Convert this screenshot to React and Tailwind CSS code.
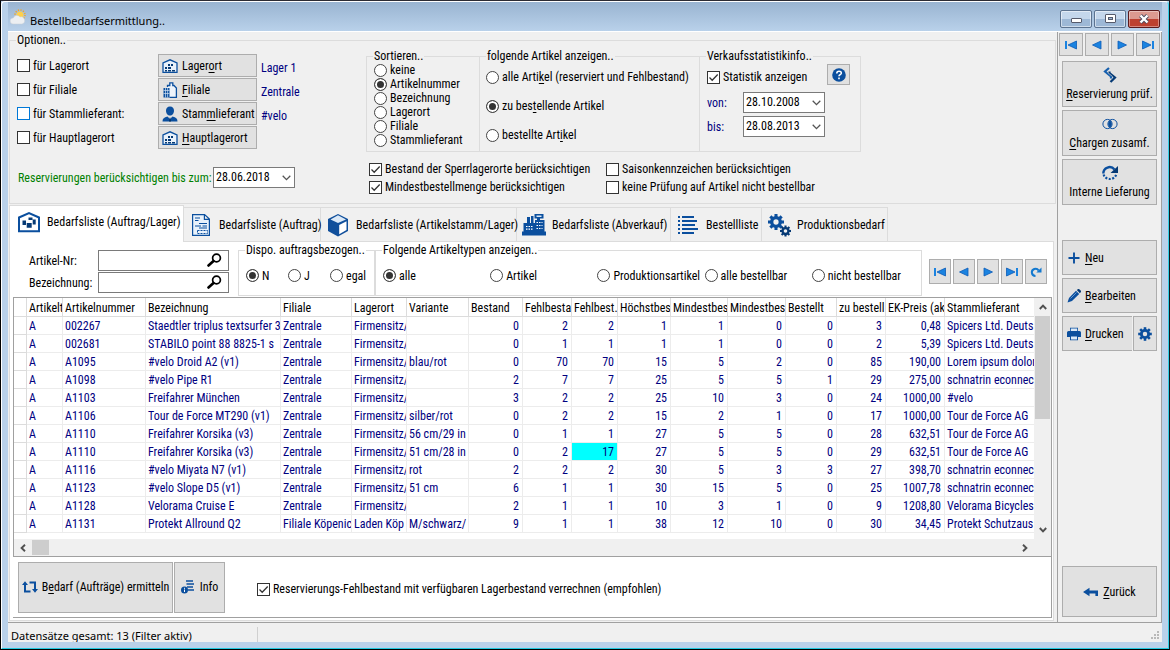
import React from 'react';
import clsx from 'clsx';

const BLUE = '#0b4f9e';
const DARK = '#063a75';

const articles = [
  ['A', '002267', 'Staedtler triplus textsurfer 36', 'Zentrale', 'Firmensitz/', '', '0', '2', '2', '1', '1', '0', '0', '3', '0,48', 'Spicers Ltd. Deuts'],
  ['A', '002681', 'STABILO point 88 8825-1 s', 'Zentrale', 'Firmensitz/', '', '0', '1', '1', '1', '1', '0', '0', '2', '5,39', 'Spicers Ltd. Deuts'],
  ['A', 'A1095', '#velo Droid A2 (v1)', 'Zentrale', 'Firmensitz/', 'blau/rot', '0', '70', '70', '15', '5', '2', '0', '85', '190,00', 'Lorem ipsum dolor'],
  ['A', 'A1098', '#velo Pipe R1', 'Zentrale', 'Firmensitz/', '', '2', '7', '7', '25', '5', '5', '1', '29', '275,00', 'schnatrin econnec'],
  ['A', 'A1103', 'Freifahrer München', 'Zentrale', 'Firmensitz/', '', '3', '2', '2', '25', '10', '3', '0', '24', '1000,00', '#velo'],
  ['A', 'A1106', 'Tour de Force MT290 (v1)', 'Zentrale', 'Firmensitz/', 'silber/rot', '0', '2', '2', '15', '2', '1', '0', '17', '1000,00', 'Tour de Force AG'],
  ['A', 'A1110', 'Freifahrer Korsika (v3)', 'Zentrale', 'Firmensitz/', '56 cm/29 in', '0', '1', '1', '27', '5', '5', '0', '28', '632,51', 'Tour de Force AG'],
  ['A', 'A1110', 'Freifahrer Korsika (v3)', 'Zentrale', 'Firmensitz/', '51 cm/28 in', '0', '2', '17', '27', '5', '5', '0', '29', '632,51', 'Tour de Force AG'],
  ['A', 'A1116', '#velo Miyata N7 (v1)', 'Zentrale', 'Firmensitz/', 'rot', '2', '2', '2', '30', '5', '3', '3', '27', '398,70', 'schnatrin econnec'],
  ['A', 'A1123', '#velo Slope D5 (v1)', 'Zentrale', 'Firmensitz/', '51 cm', '6', '1', '1', '30', '15', '5', '0', '25', '1007,78', 'schnatrin econnec'],
  ['A', 'A1128', 'Velorama Cruise E', 'Zentrale', 'Firmensitz/', '', '2', '1', '1', '10', '3', '1', '0', '9', '1208,80', 'Velorama Bicycles'],
  ['A', 'A1131', 'Protekt Allround Q2', 'Filiale Köpenic', 'Laden Köp', 'M/schwarz/', '9', '1', '1', '38', '12', '10', '0', '30', '34,45', 'Protekt Schutzaus'],
];

const columns = [
  { title: 'Artikelt', width: 'w-[36px]' },
  { title: 'Artikelnummer', width: 'w-[83px]' },
  { title: 'Bezeichnung', width: 'w-[135px]' },
  { title: 'Filiale', width: 'w-[71px]' },
  { title: 'Lagerort', width: 'w-[55px]' },
  { title: 'Variante', width: 'w-[62px]' },
  { title: 'Bestand', width: 'w-[54px]', num: true },
  { title: 'Fehlbesta', width: 'w-[49px]', num: true },
  { title: 'Fehlbest.', width: 'w-[46px]', num: true },
  { title: 'Höchstbes', width: 'w-[53px]', num: true },
  { title: 'Mindestbes', width: 'w-[57px]', num: true },
  { title: 'Mindestbes', width: 'w-[58px]', num: true },
  { title: 'Bestellt', width: 'w-[51px]', num: true },
  { title: 'zu bestell', width: 'w-[49px]', num: true },
  { title: 'EK-Preis (ak', width: 'w-[59px]', num: true },
  { title: 'Stammlieferant', width: '' },
];

// "&" marks the access key, as in the menu captions
const Caption = ({ text }) => {
  const at = text.indexOf('&');
  if (at < 0) return <span>{text}</span>;
  return (
    <span>
      {text.slice(0, at)}
      <u className="underline-offset-2">{text[at + 1]}</u>
      {text.slice(at + 2)}
    </span>
  );
};

const Check = ({ label, checked, focus, className }) => (
  <label className={clsx('flex items-center gap-[3px] whitespace-nowrap', className)}>
    <span className="relative flex shrink-0">
      <input
        type="checkbox"
        defaultChecked={checked}
        className={clsx('peer size-[13px] appearance-none border bg-white', focus ? 'border-[#0078d7]' : 'border-[#333]')}
      />
      <svg viewBox="0 0 13 13" className="pointer-events-none absolute inset-0 hidden size-[13px] peer-checked:block">
        <path d="M2.5 6.5 5.2 9.2 10.7 3.5" fill="none" stroke="#333" strokeWidth="1.3" />
      </svg>
    </span>
    {label}
  </label>
);

const Radio = ({ name, label, checked }) => (
  <label className="flex items-center gap-[3px] whitespace-nowrap">
    <input
      type="radio"
      name={name}
      defaultChecked={checked}
      className="size-[13px] shrink-0 appearance-none rounded-full border border-[#444] bg-white checked:bg-[#333] checked:shadow-[inset_0_0_0_2px_white]"
    />
    <Caption text={label} />
  </label>
);

const GroupBox = ({ title, className, children }) => (
  <fieldset className={clsx('min-w-0 border border-[#dcdcdc]', className)}>
    <legend className="ml-[6px] px-px leading-[14px]">{title}</legend>
    {children}
  </fieldset>
);

const DateSelect = ({ id, value, label }) => (
  <span className="relative flex w-[82px]">
    <select id={id} aria-label={label} className="h-[21px] w-full appearance-none border border-[#7a7a7a] bg-white px-[2px] leading-[17px] text-black">
      <option>{value}</option>
    </select>
    <svg viewBox="0 0 9 6" className="pointer-events-none absolute top-2 right-1 h-[6px] w-[9px]">
      <path d="M.7 .8 4.5 4.6 8.3 .8" fill="none" stroke="#555" strokeWidth="1.3" />
    </svg>
  </span>
);

const Button = ({ className, children, ...props }) => (
  <button type="button" className={clsx('flex items-center border border-[#adadad] bg-[#e1e1e1] whitespace-nowrap', className)} {...props}>
    {children}
  </button>
);

const NavIcon = ({ kind }) => (
  <svg viewBox="0 0 12 10" className="h-[10px] w-[12px]">
    {kind === 'first' && <path d="M0 1h2v8H0z" fill="#1b83e0" />}
    {kind === 'last' && <path d="M10 1h2v8h-2z" fill="#1b83e0" />}
    {kind === 'first' && <path d="M11.5 1v8L3 5z" fill="#1b83e0" stroke="#0b5cb8" strokeWidth=".8" />}
    {kind === 'prev' && <path d="M10 1v8L1.5 5z" fill="#1b83e0" stroke="#0b5cb8" strokeWidth=".8" />}
    {kind === 'next' && <path d="M2 1v8L10.5 5z" fill="#1b83e0" stroke="#0b5cb8" strokeWidth=".8" />}
    {kind === 'last' && <path d="M.5 1v8L9 5z" fill="#1b83e0" stroke="#0b5cb8" strokeWidth=".8" />}
    {kind === 'reload' && (
      <>
        <path d="M5.5 9A3.6 3.6 0 1 1 8.6 3.6" fill="none" stroke="#1379cf" strokeWidth="2" />
        <path d="M11.5 .5v5H6.300z" fill="#1379cf" />
      </>
    )}
  </svg>
);

const navLabels = { first: 'Erster', prev: 'Vorheriger', next: 'Nächster', last: 'Letzter', reload: 'Aktualisieren' };

const WarehouseIcon = () => (
  <svg viewBox="0 0 16 14" className="h-[14px] w-[16px]">
    <path d="M1 13.3V4L8 .8 15 4v9.3z" fill="#e9f1fa" stroke={BLUE} strokeWidth="1.3" />
    <path d="M6 5h2v2H6zM9 5h2v2H9zM3 8h2v2H3zM6 8h3v2H6zM3 11h2v1.4H3zM6 11h3v1.4H6zM10 11h3v1.4h-3z" fill={DARK} />
  </svg>
);

const BranchIcon = () => (
  <svg viewBox="0 0 16 16" className="size-[16px]">
    <path d="M5.500 5V3.500h2.300V.8h3v2.700h1.200L14.400 6v9.300H7.500" fill="#eef4fb" stroke={BLUE} strokeWidth="1.300" />
    <path d="M1.500 6h6v9.500h-6z" fill={BLUE} />
    <path d="M1.500 8.500h6M1.500 11.500h6M3.500 6v9.500M5.600 6v9.500" stroke="#cfe0f2" strokeWidth=".7" />
  </svg>
);

const PersonIcon = () => (
  <svg viewBox="0 0 16 16" className="size-[16px]">
    <path d="M8 .5c2.600 0 4 1.700 4 4.200S10.200 9.600 8 9.600 4 7.200 4 4.700 5.400.5 8 .5zM.5 15.500c0-3 1.500-4.300 5-5L8 13l2.500-2.500c3.500.7 5 2 5 5z" fill={BLUE} />
    <path d="m8 11 1 4.500H7z" fill="#06305f" />
  </svg>
);

const GearPath = ({ cx, cy, r, fill }) => (
  <g transform={`translate(${cx} ${cy})`} fill={fill}>
    {[0, 45, 90, 135, 180, 225, 270, 315].map((a) => (
      <rect key={a} x={-r * 0.19} y={-r} width={r * 0.38} height={r * 0.5} transform={`rotate(${a})`} />
    ))}
    <circle r={r * 0.54} fill="none" stroke={fill} strokeWidth={r * 0.42} />
  </g>
);

const TabIcon = ({ kind }) => (
  <svg viewBox="0 0 24 24" className="size-[24px] shrink-0">
    {kind === 'house' && (
      <>
        <path d="M2 21.200V7.500L12 3l10 4.500v13.700z" fill="none" stroke={BLUE} strokeWidth="2" />
        <path d="M11.500 7.500h4V10h-4zM5.500 10.500h3.500V15H5.500zM9.700 13h5v4.800h-5zM15.700 9.500h3v5h-3z" fill={DARK} />
      </>
    )}
    {kind === 'doc' && (
      <>
        <path d="M3.600 1.600h12L20.400 6v16.400H3.600zM15.400 1.600V6.300h5" fill="#e9f2fb" stroke={BLUE} strokeWidth="1.200" />
        <path d="M6 5h5M6 7.500h3.500M10 10.500h8M6 13h6M13.500 13H18M10 15h8" stroke={BLUE} strokeWidth="1.200" />
        <path d="M8.500 17.500h10v3h-10z" fill="none" stroke={BLUE} strokeDasharray="2 1" />
      </>
    )}
    {kind === 'cube' && (
      <>
        <path d="M12 1 22 6v12l-10 5.500L2 18V6z" fill="#104f9b" />
        <path d="M12 2.300 20 6.400 12 10 4.500 6.400z" fill="#dbe9f7" />
        <path d="M13.200 12 20.500 8.300V17l-7.300 4.200z" fill="#fff" />
      </>
    )}
    {kind === 'register' && (
      <>
        <path d="M0 18.500h24v4H0zM1.500 10H5V4h3v6h1V3h2.500v7H13V7h2V5.500h-2.500V1h9v4.500H18V7h4.500v11.500H1.500z" fill={BLUE} />
        <path d="M14.500 2.500h5V4h-5z" fill="#dbe9f7" />
        <path d="M4 13.500h7M4 16.200h7M14.500 9.500h6M14.500 12.500h6M14.500 15.500h6" stroke="#fff" strokeWidth="1.200" strokeDasharray="1.500 1" />
      </>
    )}
    {kind === 'list' && (
      <>
        <path d="M2 4h2M2 8h2M2 12h2M2 16h2M2 20h2" stroke={BLUE} strokeWidth="1.800" />
        <path d="M6 4h12M6 8h15M6 12h13M6 16h16M6 20h12" stroke={BLUE} strokeWidth="1.800" />
      </>
    )}
    {kind === 'gears' && (
      <>
        <GearPath cx={9} cy={9} r={8} fill={BLUE} />
        <GearPath cx={18.500} cy={18} r={5.500} fill={DARK} />
      </>
    )}
  </svg>
);

const tabs = [
  { label: 'Bedarfsliste (Auftrag/Lager)', icon: 'house', width: 'w-[175px]', active: true },
  { label: 'Bedarfsliste (Auftrag)', icon: 'doc', width: 'w-[137px]' },
  { label: 'Bedarfsliste (Artikelstamm/Lager)', icon: 'cube', width: 'w-[196px]' },
  { label: 'Bedarfsliste (Abverkauf)', icon: 'register', width: 'w-[154px]' },
  { label: 'Bestellliste', icon: 'list', width: 'w-[91px]' },
  { label: 'Produktionsbedarf', icon: 'gears', width: 'w-[126px]' },
];

const TitleBar = () => (
  <header className="flex h-[29px] shrink-0 items-center bg-linear-to-b from-[#99b4d1] to-[#b9d1ea] pr-[2px] pl-[2px]">
    <svg viewBox="0 0 16 16" className="size-[16px]">
      <circle cx="10" cy="6" r="3.500" fill="#ffd04a" />
      <circle cx="10" cy="6" r="5" fill="none" stroke="#f5a623" strokeWidth="1.500" strokeDasharray="1.200 1.400" />
      <path d="M3 15a3 3 0 0 1 .3-6A3.800 3.800 0 0 1 10 8a3.500 3.500 0 0 1 2 7z" fill="#eceff2" stroke="#c9ced4" strokeWidth=".5" />
    </svg>
    <h1 className="ml-1 flex-1 pt-2 font-['Noto_Sans',sans-serif] text-[11px] leading-4">Bestellbedarfsermittlung..</h1>
    <div className="flex gap-[2px] pt-1">
      <button type="button" aria-label="Minimieren" className="flex h-[18px] w-[32px] items-center justify-center rounded-[2px] border border-[#5c7390] bg-linear-to-b from-[#c4d7ec] from-50% to-[#9db8d6] to-50% shadow-[inset_0_0_0_1px_#ffffff80]">
        <span className="mt-1 h-[5px] w-[11px] rounded-[1px] border border-[#555a6b] bg-white" />
      </button>
      <button type="button" aria-label="Maximieren" className="flex h-[18px] w-[32px] items-center justify-center rounded-[2px] border border-[#5c7390] bg-linear-to-b from-[#c4d7ec] from-50% to-[#9db8d6] to-50% shadow-[inset_0_0_0_1px_#ffffff80]">
        <span className="flex h-[9px] w-[11px] items-center justify-center rounded-[1px] border border-[#555a6b] bg-white">
          <span className="h-[3px] w-[5px] border border-[#555a6b] bg-[#9db8d6]" />
        </span>
      </button>
      <button type="button" aria-label="Schließen" className="flex h-[18px] w-[32px] items-center justify-center rounded-[2px] border border-[#5b1a1c] bg-linear-to-b from-[#dc9a90] from-50% to-[#bd4130] to-50% shadow-[inset_0_0_0_1px_#ffffff60]">
        <svg viewBox="0 0 12 10" className="h-[10px] w-[12px]">
          <path d="m2.500 1.500 7 7m0-7-7 7" stroke="#4a4d60" strokeWidth="4" />
          <path d="m2.500 1.500 7 7m0-7-7 7" stroke="#fff" strokeWidth="2.400" />
        </svg>
      </button>
    </div>
  </header>
);

const optionRows = [
  { label: 'für Lagerort', button: 'Lager&ort', icon: <WarehouseIcon />, value: 'Lager 1' },
  { label: 'für Filiale', button: '&Filiale', icon: <BranchIcon />, value: 'Zentrale' },
  { label: 'für Stammlieferant:', button: 'Stam&mlieferant', icon: <PersonIcon />, value: '#velo', focus: true },
  { label: 'für Hauptlagerort', button: '&Hauptlagerort', icon: <WarehouseIcon />, value: '' },
];

const Options = () => (
  <GroupBox title="Optionen.." className="mx-px mt-px">
    <div className="flex pb-[7px] pl-[7px]">
      <div className="w-[349px] shrink-0 pt-[7px]">
        <div className="flex flex-col gap-px">
          {optionRows.map((row) => (
            <div key={row.label} className="flex h-[23px] items-center">
              <Check label={row.label} focus={row.focus} className="w-[141px]" />
              <Button className="h-[23px] w-[99px] gap-1 pl-[3px]">
                <span className="flex w-[16px] justify-center">{row.icon}</span>
                <Caption text={row.button} />
              </Button>
              <span className="pt-1 pl-1 text-[#000080]">{row.value}</span>
            </div>
          ))}
        </div>
        <div className="mt-[18px] flex items-center pl-px text-[#008000]">
          <label htmlFor="reserved-until" className="w-[195px] whitespace-nowrap">Reservierungen berücksichtigen bis zum:</label>
          <DateSelect id="reserved-until" value="28.06.2018" />
        </div>
      </div>
      <div className="pt-[2px]">
        <div className="flex">
          <GroupBox title="Sortieren.." className="w-[114px]">
            <div className="pb-1 pl-[7px] leading-[14px]">
              <Radio name="sort" label="keine" />
              <Radio name="sort" label="Artikelnummer" checked />
              <Radio name="sort" label="Bezeichnung" />
              <Radio name="sort" label="Lagerort" />
              <Radio name="sort" label="Filiale" />
              <Radio name="sort" label="Stammlieferant" />
            </div>
          </GroupBox>
          <GroupBox title="folgende Artikel anzeigen.." className="w-[220px] border-l-0">
            <div className="flex flex-col gap-[13px] pt-[6px] pl-[6px] leading-4">
              <Radio name="show" label="alle Arti&kel (reserviert und Fehlbestand)" />
              <Radio name="show" label="zu bes&tellende Artikel" checked />
              <Radio name="show" label="bestellte Art&ikel" />
            </div>
          </GroupBox>
          <GroupBox title="Verkaufsstatistikinfo.." className="w-[161px] border-l-0">
            <div className="flex flex-col gap-[3px] pt-px pl-[7px]">
              <div className="flex h-[25px] items-start">
                <Check label="Statistik anzeigen" checked className="w-[120px] pt-[6px]" />
                <Button className="h-[21px] w-[23px] justify-center" aria-label="Hilfe">
                  <svg viewBox="0 0 14 14" className="size-[14px]">
                    <circle cx="7" cy="7" r="6.800" fill={BLUE} />
                    <path d="M4.800 5.400c0-3 4.600-2.800 4.500-.2C9.200 6.700 7 6.700 7 8.300M7 9.600v1.600" fill="none" stroke="#fff" strokeWidth="1.600" />
                  </svg>
                </Button>
              </div>
              <div className="flex items-center text-[#000080]">
                <label htmlFor="from" className="w-[36px]">von:</label>
                <DateSelect id="from" value="28.10.2008" />
              </div>
              <div className="flex items-center text-[#000080]">
                <label htmlFor="to" className="w-[36px]">bis:</label>
                <DateSelect id="to" value="28.08.2013" />
              </div>
            </div>
          </GroupBox>
        </div>
        <div className="mt-2 grid grid-cols-[237px_auto] pl-[3px] leading-[18px]">
          <Check label="Bestand der Sperrlagerorte berücksichtigen" checked />
          <Check label="Saisonkennzeichen berücksichtigen" />
          <Check label="Mindestbestellmenge berücksichtigen" checked />
          <Check label="keine Prüfung auf Artikel nicht bestellbar" />
        </div>
      </div>
    </div>
  </GroupBox>
);

const SearchField = ({ id, label }) => (
  <div className="flex items-center">
    <label htmlFor={id} className="w-[69px] whitespace-nowrap">{label}</label>
    <span className="relative flex">
      <input id={id} type="text" className="h-[21px] w-[131px] border border-[#7a7a7a] bg-white pr-6 pl-1" />
      <svg viewBox="0 0 15 14" className="pointer-events-none absolute top-[3px] right-[7px] h-[14px] w-[15px]">
        <circle cx="9.500" cy="5" r="3.900" fill="none" stroke="#000" strokeWidth="1.700" />
        <path d="M6.500 8 1.500 12.500" stroke="#000" strokeWidth="2.600" strokeLinecap="round" />
      </svg>
    </span>
  </div>
);

const Filters = () => (
  <div className="flex items-start pt-px pr-[6px] pl-[19px]">
    <div className="flex flex-col gap-px pt-[7px]">
      <SearchField id="article-no" label="Artikel-Nr:" />
      <SearchField id="description" label="Bezeichnung:" />
    </div>
    <GroupBox title="Dispo. auftragsbezogen.." className="ml-[9px] h-[53px] w-[137px]">
      <div className="flex h-[37px] items-center pl-[7px]">
        <span className="w-[42px]"><Radio name="dispo" label="N" checked /></span>
        <span className="w-[42px]"><Radio name="dispo" label="J" /></span>
        <Radio name="dispo" label="egal" />
      </div>
    </GroupBox>
    <GroupBox title="Folgende Artikeltypen anzeigen.." className="h-[53px] flex-1">
      <div className="grid h-[37px] grid-cols-5 items-center pr-[2px] pl-[7px]">
        <Radio name="type" label="alle" checked />
        <Radio name="type" label="Artikel" />
        <Radio name="type" label="Produktionsartikel" />
        <Radio name="type" label="alle bestellbar" />
        <Radio name="type" label="nicht bestellbar" />
      </div>
    </GroupBox>
    <div className="ml-[7px] flex gap-[2px] pt-4">
      {['first', 'prev', 'next', 'last', 'reload'].map((kind) => (
        <Button key={kind} className="h-[25px] w-[22px] justify-center" aria-label={navLabels[kind]}>
          <NavIcon kind={kind} />
        </Button>
      ))}
    </div>
  </div>
);

const Arrow = ({ d }) => (
  <svg viewBox="0 0 8 8" className="size-2">
    <path d={d} fill="none" stroke="#505050" strokeWidth="1.900" />
  </svg>
);

const Grid = () => (
  <div className="mt-px mr-px ml-[3px] flex min-h-0 flex-1 flex-col border border-[#a0a0a0] bg-white">
    <div className="flex min-h-0 flex-1">
      <div className="min-w-0 flex-1 overflow-hidden">
        <table className="w-full table-fixed border-separate border-spacing-0 text-left">
          <colgroup>
            <col className="w-[13px]" />
            {columns.map((col, i) => (
              <col key={i} className={col.width} />
            ))}
          </colgroup>
          <thead>
            <tr className="h-[19px]">
              <th className="border-r border-b border-[#dcdcdc] p-0" />
              {columns.map((col, i) => (
                <th key={i} className="overflow-hidden border-r border-b border-[#dcdcdc] p-0 pt-px pl-[2px] leading-4 font-normal whitespace-nowrap last:border-r-0">
                  {col.title}
                </th>
              ))}
            </tr>
          </thead>
          <tbody className="text-[#000080]">
            {articles.map((row, r) => (
              <tr key={r} className="h-[18px]">
                <td className="border-r border-b border-[#dcdcdc] p-0" />
                {row.map((cell, c) => (
                  <td
                    key={c}
                    className={clsx(
                      'overflow-hidden border-r border-b border-[#ececec] p-0 pt-px leading-4 whitespace-nowrap last:border-r-0',
                      columns[c].num ? 'pr-[3px] text-right' : 'pl-[2px]',
                      cell === '17' && c === 8 && 'bg-[#00ffff]'
                    )}
                  >
                    {cell}
                  </td>
                ))}
              </tr>
            ))}
          </tbody>
        </table>
      </div>
      <div className="flex w-[17px] flex-col items-center bg-[#f0f0f0]">
        <div className="flex h-[18px] items-center"><Arrow d="M.8 6 4 2.600 7.200 6" /></div>
        <div className="h-[103px] w-[15px] bg-[#cdcdcd]" />
        <div className="mt-auto flex h-[18px] items-center"><Arrow d="M.8 2 4 5.400 7.200 2" /></div>
      </div>
    </div>
    <div className="flex h-[17px] shrink-0 items-center bg-[#f0f0f0] pr-[22px] pl-[5px]">
      <Arrow d="M6 .8 2.600 4 6 7.200" />
      <div className="ml-[5px] h-[15px] w-[17px] bg-[#cdcdcd]" />
      <span className="ml-auto flex"><Arrow d="M2 .8 5.400 4 2 7.200" /></span>
    </div>
  </div>
);

const Footer = () => (
  <div className="mr-px ml-[3px] flex h-[61px] shrink-0 items-center gap-px border-r border-b border-[#a0a0a0] bg-white pl-[5px]">
    <Button className="h-[51px] w-[155px] justify-center gap-1">
      <svg viewBox="0 0 16 12" className="h-[12px] w-[16px]">
        <path d="M3 3v7.500h5.500M13 9V1.500H7.500" fill="none" stroke={BLUE} strokeWidth="2" />
        <path d="M3 .3 6 4H0zM13 11.700 10 8h6z" fill={BLUE} />
      </svg>
      <Caption text="B&edarf (Aufträge) ermitteln" />
    </Button>
    <Button className="h-[51px] w-[51px] justify-center gap-[6px]">
      <svg viewBox="0 0 13 14" className="h-[14px] w-[13px]">
        <path d="M5 1h7M5.500 4H13M6 7h6M7 10h6" stroke={BLUE} strokeWidth="1.500" />
        <circle cx="3.500" cy="10" r="3.500" fill={BLUE} />
        <path d="M3.500 7.800v1M3.500 9.500v2.500" stroke="#fff" />
      </svg>
      Info
    </Button>
    <Check label="Reservierungs-Fehlbestand mit verfügbaren Lagerbestand verrechnen (empfohlen)" checked className="pt-1 pl-[31px]" />
  </div>
);

const Sidebar = () => (
  <aside className="flex w-[105px] shrink-0 flex-col border-x border-[#a0a0a0] pt-px">
    <div className="grid grid-cols-4 gap-[2px] px-px">
      {['first', 'prev', 'next', 'last'].map((kind) => (
        <Button key={kind} className="h-[23px] justify-center" aria-label={navLabels[kind]}>
          <NavIcon kind={kind} />
        </Button>
      ))}
    </div>
    <div className="flex flex-1 flex-col gap-[3px] px-1 pt-[5px] pb-[5px]">
      <Button className="h-[46px] flex-col justify-center gap-1">
        <svg viewBox="0 0 14 16" className="h-[16px] w-[14px]">
          <path d="M6 1 2 4.500 8 9.500v2" fill="none" stroke="#1760ae" strokeWidth="2.200" />
          <path d="M7.500 15l4.500-4.500L6.500 6V4.500" fill="none" stroke={DARK} strokeWidth="2.200" />
          <path d="M4.800 5.600 9.600 9.600" stroke="#e1e1e1" strokeWidth=".7" />
        </svg>
        <Caption text="&Reservierung prüf." />
      </Button>
      <Button className="h-[46px] flex-col justify-center gap-1">
        <svg viewBox="0 0 16 16" className="size-[16px]">
          <path d="M8 4.200a4.800 4.800 0 0 1 0 7.600 4.800 4.800 0 0 1 0-7.600z" fill={BLUE} />
          <circle cx="5.500" cy="8" r="4.600" fill="none" stroke={BLUE} />
          <circle cx="10.500" cy="8" r="4.600" fill="none" stroke={BLUE} />
        </svg>
        <Caption text="&Chargen zusamf." />
      </Button>
      <Button className="h-[46px] flex-col justify-center gap-1">
        <svg viewBox="0 0 16 16" className="size-[16px]">
          <path d="M1.300 8.500A6.300 6.300 0 0 1 12.500 4.500" fill="none" stroke={BLUE} strokeWidth="2.400" />
          <path d="M16 1v7H8.500z" fill={DARK} />
          <path d="M1.600 9.500A6.500 6 0 0 0 14.200 9.500" fill="none" stroke={BLUE} strokeWidth="2.200" strokeDasharray="2 1.500" />
        </svg>
        <span>Interne Lieferung</span>
      </Button>
      <Button className="mt-8 h-[35px] gap-1 pl-1">
        <svg viewBox="0 0 14 14" className="size-[14px]">
          <path d="M7 1.500v11M1.500 7h11" stroke={BLUE} strokeWidth="1.900" />
        </svg>
        <Caption text="&Neu" />
      </Button>
      <Button className="h-[35px] gap-1 pl-1">
        <svg viewBox="0 0 14 14" className="size-[14px]">
          <path d="M.5 13.500 2 9l7-7.200L12.200 5 5 12z" fill={BLUE} />
          <path d="m9.800 1 1-.8a1.500 1.500 0 0 1 1.800.2l1 1a1.500 1.500 0 0 1 .1 1.900l-.8.900z" fill={DARK} />
          <path d="m3.500 9.500 6-6" stroke="#7fa9d8" strokeWidth=".8" />
        </svg>
        <Caption text="&Bearbeiten" />
      </Button>
      <div className="flex h-[35px]">
        <Button className="flex-1 gap-1 border-r-0 pl-1">
          <svg viewBox="0 0 14 14" className="size-[14px]">
            <path d="M3 4V.8h8V4h1.500A1.500 1.500 0 0 1 14 5.500V10h-3v3.300H3V10H0V5.500A1.500 1.500 0 0 1 1.500 4z" fill={BLUE} />
            <path d="M3.800 1.500h6.400V4H3.800zM4 9.500h6v3H4z" fill="#dbe9f7" />
          </svg>
          <Caption text="&Drucken" />
        </Button>
        <Button className="ml-px w-[24px] justify-center" aria-label="Druckeinstellungen">
          <svg viewBox="0 0 14 14" className="size-[14px]">
            <GearPath cx={7} cy={7} r={6.800} fill={BLUE} />
          </svg>
        </Button>
      </div>
      <Button className="mt-auto h-[51px] justify-center gap-1">
        <svg viewBox="0 0 16 10" className="h-[10px] w-[16px]">
          <path d="M0 5 6.500.8V3.500H15V9h-2.600V6.500H6.500v2.700z" fill={BLUE} />
        </svg>
        <Caption text="&Zurück" />
      </Button>
    </div>
  </aside>
);

const App = () => {
  return (
    <div className="flex h-screen min-h-[650px] w-full flex-col overflow-hidden border border-t-[#2b2b33] border-r-[#101820] border-b-black border-l-black bg-[#b9d1ea] font-['Roboto_Condensed','Roboto','Liberation_Sans',sans-serif] text-[12px] leading-[14px] text-black">
      <div className="flex min-h-0 flex-1 flex-col rounded-t-[4px] border border-t-white border-r-[#35cfe6] border-b-[#20c8e0] border-l-white bg-[#b9d1ea] px-[6px] pb-[6px]">
        <TitleBar />
        <div className="flex min-h-0 flex-1 flex-col border-t border-white bg-[#f0f0f0]">
          <div className="flex min-h-0 flex-1">
            <main className="flex min-w-0 flex-1 flex-col">
              <Options />
              <nav className="ml-px flex items-end pt-px" role="tablist">
                {tabs.map((tab) => (
                  <button
                    key={tab.label}
                    type="button"
                    role="tab"
                    aria-selected={!!tab.active}
                    className={clsx(
                      'flex items-center gap-[6px] border-t border-r border-[#dcdcdc] whitespace-nowrap',
                      tab.width,
                      tab.active ? 'relative -mb-px h-[37px] border-l bg-white pb-1 pl-[7px]' : 'h-[34px] pl-[5px]'
                    )}
                  >
                    <TabIcon kind={tab.icon} />
                    {tab.label}
                  </button>
                ))}
              </nav>
              <section className="mr-[3px] mb-px ml-px flex min-h-0 flex-1 flex-col border border-[#dcdcdc] bg-white pb-[2px]">
                <Filters />
                <Grid />
                <Footer />
              </section>
            </main>
            <Sidebar />
          </div>
          <footer className="flex h-[20px] shrink-0 items-end border-t border-[#a0a0a0] pl-[3px] font-['Noto_Sans',sans-serif] text-[11px] leading-[18px]">
            <span className="h-[15px] w-[247px] overflow-hidden border-r border-[#d0d0d0]">Datensätze gesamt: 13 (Filter aktiv)</span>
            <svg viewBox="0 0 9 9" className="mr-[2px] mb-[2px] ml-auto size-[9px]">
              <path d="M6 0h2v2H6zM6 3h2v2H6zM6 6h2v2H6zM3 3h2v2H3zM3 6h2v2H3zM0 6h2v2H0z" fill="#b8b8b8" />
            </svg>
          </footer>
        </div>
      </div>
    </div>
  );
};

export default App;
